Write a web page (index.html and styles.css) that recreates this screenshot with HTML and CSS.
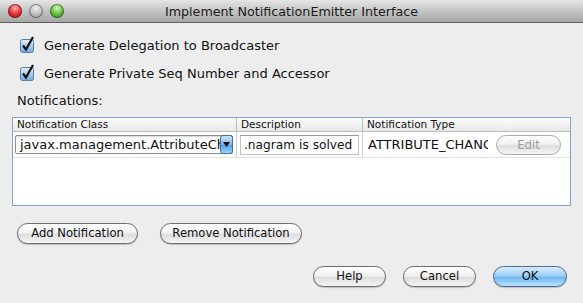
FILE: index.html
```html
<!DOCTYPE html>
<html lang="en">
<head>
    <meta charset="UTF-8">
    <title>Implement NotificationEmitter Interface</title>
    <link rel="stylesheet" href="styles.css">
</head>
<body>
    <div class="window">
        <header class="titlebar">
            <div class="lights">
                <span class="light red"></span>
                <span class="light grey"></span>
                <span class="light green"></span>
            </div>
            <h1>Implement NotificationEmitter Interface</h1>
        </header>

        <main class="content">
            <label class="check">
                <svg class="box" width="16" height="17" viewBox="0 0 16 17">
                    <defs>
                        <linearGradient id="boxFill" x1="0" y1="0" x2="0" y2="1">
                            <stop offset="0" stop-color="#e4f0fc"/>
                            <stop offset="0.5" stop-color="#a9cdf1"/>
                            <stop offset="1" stop-color="#6fa9e4"/>
                        </linearGradient>
                    </defs>
                    <rect x="0.5" y="3.5" width="13" height="13" rx="2" fill="url(#boxFill)" stroke="#5a7ca3"/>
                    <path d="M3 9.5 L6 13.5 L13 1" fill="none" stroke="#111" stroke-width="2.2" stroke-linejoin="miter"/>
                </svg>
                Generate Delegation to Broadcaster
            </label>
            <label class="check">
                <svg class="box" width="16" height="17" viewBox="0 0 16 17">
                    <rect x="0.5" y="3.5" width="13" height="13" rx="2" fill="url(#boxFill)" stroke="#5a7ca3"/>
                    <path d="M3 9.5 L6 13.5 L13 1" fill="none" stroke="#111" stroke-width="2.2" stroke-linejoin="miter"/>
                </svg>
                Generate Private Seq Number and Accessor
            </label>

            <div class="section-label">Notifications:</div>

            <div class="table">
                <div class="thead">
                    <div class="th col-class">Notification Class</div>
                    <div class="th col-desc">Description</div>
                    <div class="th col-type">Notification Type</div>
                </div>
                <div class="tr">
                    <div class="td col-class">
                        <div class="combo">
                            <span class="combo-text">javax.management.AttributeChangeNotification</span>
                            <span class="combo-arrow">
                                <svg width="7" height="5" viewBox="0 0 7 5"><path d="M0 0 H7 L3.5 5 Z" fill="#111"/></svg>
                            </span>
                        </div>
                    </div>
                    <div class="td col-desc">
                        <div class="field">.nagram is solved</div>
                    </div>
                    <div class="td col-type">
                        <span class="type-text">ATTRIBUTE_CHANGE</span>
                        <button class="pill small" disabled>Edit</button>
                    </div>
                </div>
            </div>

            <div class="table-actions">
                <button class="pill add">Add Notification</button>
                <button class="pill remove">Remove Notification</button>
            </div>

            <div class="dialog-actions">
                <button class="pill">Help</button>
                <button class="pill">Cancel</button>
                <button class="pill default">OK</button>
            </div>
        </main>
    </div>
</body>
</html>
```

FILE: styles.css
```css
* {
    box-sizing: border-box;
    margin: 0;
    padding: 0;
}

body {
    background-color: #ededed;
    color: #111;
    font-family: 'DejaVu Sans', 'Liberation Sans', sans-serif;
    font-size: 13px;
    height: 303px;
    overflow: hidden;
    width: 583px;
}

.window {
    display: flex;
    flex-direction: column;
    height: 303px;
}

.titlebar {
    align-items: center;
    background-image: linear-gradient(to bottom, #e6e6e6, #c4c4c4 50%, #a6a6a6);
    border-bottom: 1px solid #616161;
    display: flex;
    height: 23px;
    position: relative;
}

.titlebar h1 {
    color: #1a1a1a;
    flex: 1;
    font-size: 12.7px;
    font-weight: normal;
    text-align: center;
}

.lights {
    display: flex;
    gap: 7px;
    left: 8px;
    position: absolute;
    top: 4px;
}

.light {
    border-radius: 50%;
    box-shadow: inset 0 0 0 1px rgba(0, 0, 0, 0.35);
    height: 14px;
    width: 14px;
}

.light.red {
    background-image: radial-gradient(circle at 50% 30%, #ffb3b3 0, #e8393b 45%, #9e0d0f 100%);
}

.light.grey {
    background-image: radial-gradient(circle at 50% 30%, #f2f2f2 0, #c4c4c4 45%, #8f8f8f 100%);
}

.light.green {
    background-image: radial-gradient(circle at 50% 30%, #d9f7c4 0, #6cc243 45%, #2e7d14 100%);
}

.content {
    display: flex;
    flex-direction: column;
    padding: 14px 12px 0;
}

.check {
    align-items: center;
    display: flex;
    gap: 8px;
    height: 17px;
    margin-left: 8px;
}

.check + .check {
    margin-top: 11px;
}

.box {
    flex: none;
    margin-top: -3px;
}

.section-label {
    line-height: 16px;
    margin: 11px 0 0 5px;
}

.table {
    background-color: #fff;
    border: 1px solid #7ea5cf;
    display: flex;
    flex-direction: column;
    height: 89px;
    margin-top: 8px;
}

.thead {
    background-image: linear-gradient(to bottom, #fdfdfd, #e8e8e8);
    border-bottom: 1px solid #bcbcbc;
    display: flex;
    font-size: 10.5px;
    height: 14px;
    line-height: 13px;
}

.th {
    border-right: 1px solid #bcbcbc;
    padding-left: 4px;
}

.th:last-child {
    border-right: none;
}

.col-class {
    width: 224px;
}

.col-desc {
    width: 126px;
}

.col-type {
    flex: 1;
}

.tr {
    border-bottom: 1px solid #e2e2e2;
    display: flex;
    height: 26px;
}

.td {
    align-items: center;
    border-right: 1px solid #d0d0d0;
    display: flex;
}

.td:last-child {
    border-right: none;
}

.td.col-class {
    padding: 0 3px 0 2px;
}

.combo {
    align-items: center;
    background-color: #fff;
    border: 1px solid #8c8c8c;
    border-radius: 2px;
    box-shadow: inset 0 1px 1px rgba(0, 0, 0, 0.15);
    display: flex;
    height: 19px;
    width: 218px;
}

.combo-text {
    flex: 1;
    overflow: hidden;
    padding-left: 4px;
    white-space: nowrap;
}

.combo-arrow {
    align-items: center;
    background-image: linear-gradient(to bottom, #cfe5fb, #7db6ee 50%, #4f98e2 51%, #a4d1f7);
    border: 1px solid #3f6ea3;
    border-radius: 3px;
    display: flex;
    height: 19px;
    justify-content: center;
    margin: 0 -1px 0 0;
    width: 13px;
}

.td.col-desc {
    padding: 0 3px;
}

.field {
    border: 1px solid #c4c4c4;
    border-top-color: #9a9a9a;
    font-size: 12.2px;
    height: 20px;
    line-height: 18px;
    overflow: hidden;
    padding-left: 3px;
    white-space: nowrap;
    width: 119px;
}

.td.col-type {
    gap: 8px;
    padding-left: 5px;
}

.type-text {
    overflow: hidden;
    white-space: nowrap;
    width: 120px;
}

.pill {
    background-image: linear-gradient(to bottom, #ffffff, #f1f1f1 45%, #dedede 55%, #f4f4f4);
    border: 1px solid #6e6e6e;
    border-radius: 11px;
    box-shadow: 0 1px 1px rgba(0, 0, 0, 0.2);
    color: #111;
    font-family: inherit;
    font-size: 11.6px;
    height: 21px;
    line-height: 19px;
    width: 73px;
}

.pill.small {
    border-color: #adadad;
    box-shadow: none;
    color: #9c9c9c;
    height: 20px;
    width: 65px;
}

.table-actions {
    display: flex;
    gap: 22px;
    margin: 17px 0 0 5px;
}

.pill.add {
    width: 121px;
}

.pill.remove {
    width: 142px;
}

.dialog-actions {
    display: flex;
    gap: 17px;
    justify-content: flex-end;
    margin: 22px 4px 0 0;
}

.pill.default {
    background-image: linear-gradient(to bottom, #d6ecfd, #9fd0f8 45%, #72b9f2 55%, #b6e3fd);
    border-color: #4c6a95;
    width: 74px;
}
```
